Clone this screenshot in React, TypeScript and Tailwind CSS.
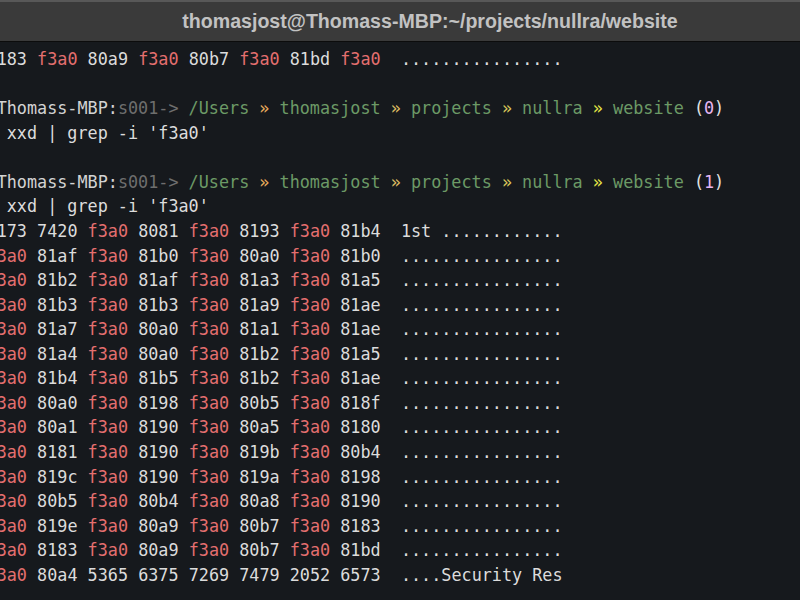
const mono = "font-['DejaVu_Sans_Mono','Liberation_Mono',monospace]";

const RED = "text-[#e46f6f]";

type Row = { off: string; groups: string[]; ascii: string };

const rows: Row[] = [
  { off: "00000c30", groups: ["8183", "f3a0", "80a9", "f3a0", "80b7", "f3a0", "81bd", "f3a0"], ascii: "................" },
];

const grepRows: Row[] = [
  { off: "00000000", groups: ["3173", "7420", "f3a0", "8081", "f3a0", "8193", "f3a0", "81b4"], ascii: "1st ............" },
  { off: "00000010", groups: ["f3a0", "81af", "f3a0", "81b0", "f3a0", "80a0", "f3a0", "81b0"], ascii: "................" },
  { off: "00000020", groups: ["f3a0", "81b2", "f3a0", "81af", "f3a0", "81a3", "f3a0", "81a5"], ascii: "................" },
  { off: "00000030", groups: ["f3a0", "81b3", "f3a0", "81b3", "f3a0", "81a9", "f3a0", "81ae"], ascii: "................" },
  { off: "00000040", groups: ["f3a0", "81a7", "f3a0", "80a0", "f3a0", "81a1", "f3a0", "81ae"], ascii: "................" },
  { off: "00000050", groups: ["f3a0", "81a4", "f3a0", "80a0", "f3a0", "81b2", "f3a0", "81a5"], ascii: "................" },
  { off: "00000060", groups: ["f3a0", "81b4", "f3a0", "81b5", "f3a0", "81b2", "f3a0", "81ae"], ascii: "................" },
  { off: "00000070", groups: ["f3a0", "80a0", "f3a0", "8198", "f3a0", "80b5", "f3a0", "818f"], ascii: "................" },
  { off: "00000080", groups: ["f3a0", "80a1", "f3a0", "8190", "f3a0", "80a5", "f3a0", "8180"], ascii: "................" },
  { off: "00000090", groups: ["f3a0", "8181", "f3a0", "8190", "f3a0", "819b", "f3a0", "80b4"], ascii: "................" },
  { off: "000000a0", groups: ["f3a0", "819c", "f3a0", "8190", "f3a0", "819a", "f3a0", "8198"], ascii: "................" },
  { off: "000000b0", groups: ["f3a0", "80b5", "f3a0", "80b4", "f3a0", "80a8", "f3a0", "8190"], ascii: "................" },
  { off: "000000c0", groups: ["f3a0", "819e", "f3a0", "80a9", "f3a0", "80b7", "f3a0", "8183"], ascii: "................" },
  { off: "000000d0", groups: ["f3a0", "8183", "f3a0", "80a9", "f3a0", "80b7", "f3a0", "81bd"], ascii: "................" },
  { off: "000000e0", groups: ["f3a0", "80a4", "5365", "6375", "7269", "7479", "2052", "6573"], ascii: "....Security Res" },
];

function HexLine({ row }: { row: Row }) {
  return (
    <div className="text-[#dcdcdc]">
      {row.off}:{" "}
      {row.groups.map((g, i) => (
        <span key={i}>
          {g === "f3a0" ? <span className={RED}>{g}</span> : g}{" "}
        </span>
      ))}{" "}
      {row.ascii}
    </div>
  );
}

function Prompt({ code }: { code: string }) {
  return (
    <div>
      <span className="text-[#d3d3d3]">thomasjost@Thomass-MBP:</span>
      <span className="text-[#6e6e6e]">s001-&gt;</span>{" "}
      <span className="text-[#6c9a66]">/Users</span>{" "}
      <span className="text-[#e8ac5c]">»</span>{" "}
      <span className="text-[#6c9a66]">thomasjost</span>{" "}
      <span className="text-[#dcbb62]">»</span>{" "}
      <span className="text-[#6c9a66]">projects</span>{" "}
      <span className="text-[#d9c65a]">»</span>{" "}
      <span className="text-[#6c9a66]">nullra</span>{" "}
      <span className="text-[#e4e446]">»</span>{" "}
      <span className="text-[#6c9a66]">website</span>{" "}
      <span className="text-[#e2e2e2]">
        (<span className="text-[#e8b6f2]">{code}</span>)
      </span>
    </div>
  );
}

function Command() {
  return <div className="text-[#dcdcdc]">cat index | xxd | grep -i 'f3a0'</div>;
}

export default function App() {
  return (
    <div className="flex h-[600px] w-[800px] flex-col overflow-hidden bg-[#16191d]">
      <div className="flex h-[42px] shrink-0 items-center justify-center border-t-2 border-b border-t-[#585858] border-b-[#0c0c0c] bg-[#3a3a3a] pl-[60px]">
        <span className="font-['Liberation_Sans',Arial,sans-serif] text-[19.6px] font-bold text-[#c2c2c2]">
          thomasjost@Thomass-MBP:~/projects/nullra/website
        </span>
      </div>
      <div
        className={`${mono} ml-[-114.5px] whitespace-pre pt-[5px] text-[16.8px] leading-[24.57px]`}
      >
        {rows.map((r, i) => (
          <HexLine key={i} row={r} />
        ))}
        <div>&nbsp;</div>
        <Prompt code="0" />
        <Command />
        <div>&nbsp;</div>
        <Prompt code="1" />
        <Command />
        {grepRows.map((r, i) => (
          <HexLine key={i} row={r} />
        ))}
      </div>
    </div>
  );
}
